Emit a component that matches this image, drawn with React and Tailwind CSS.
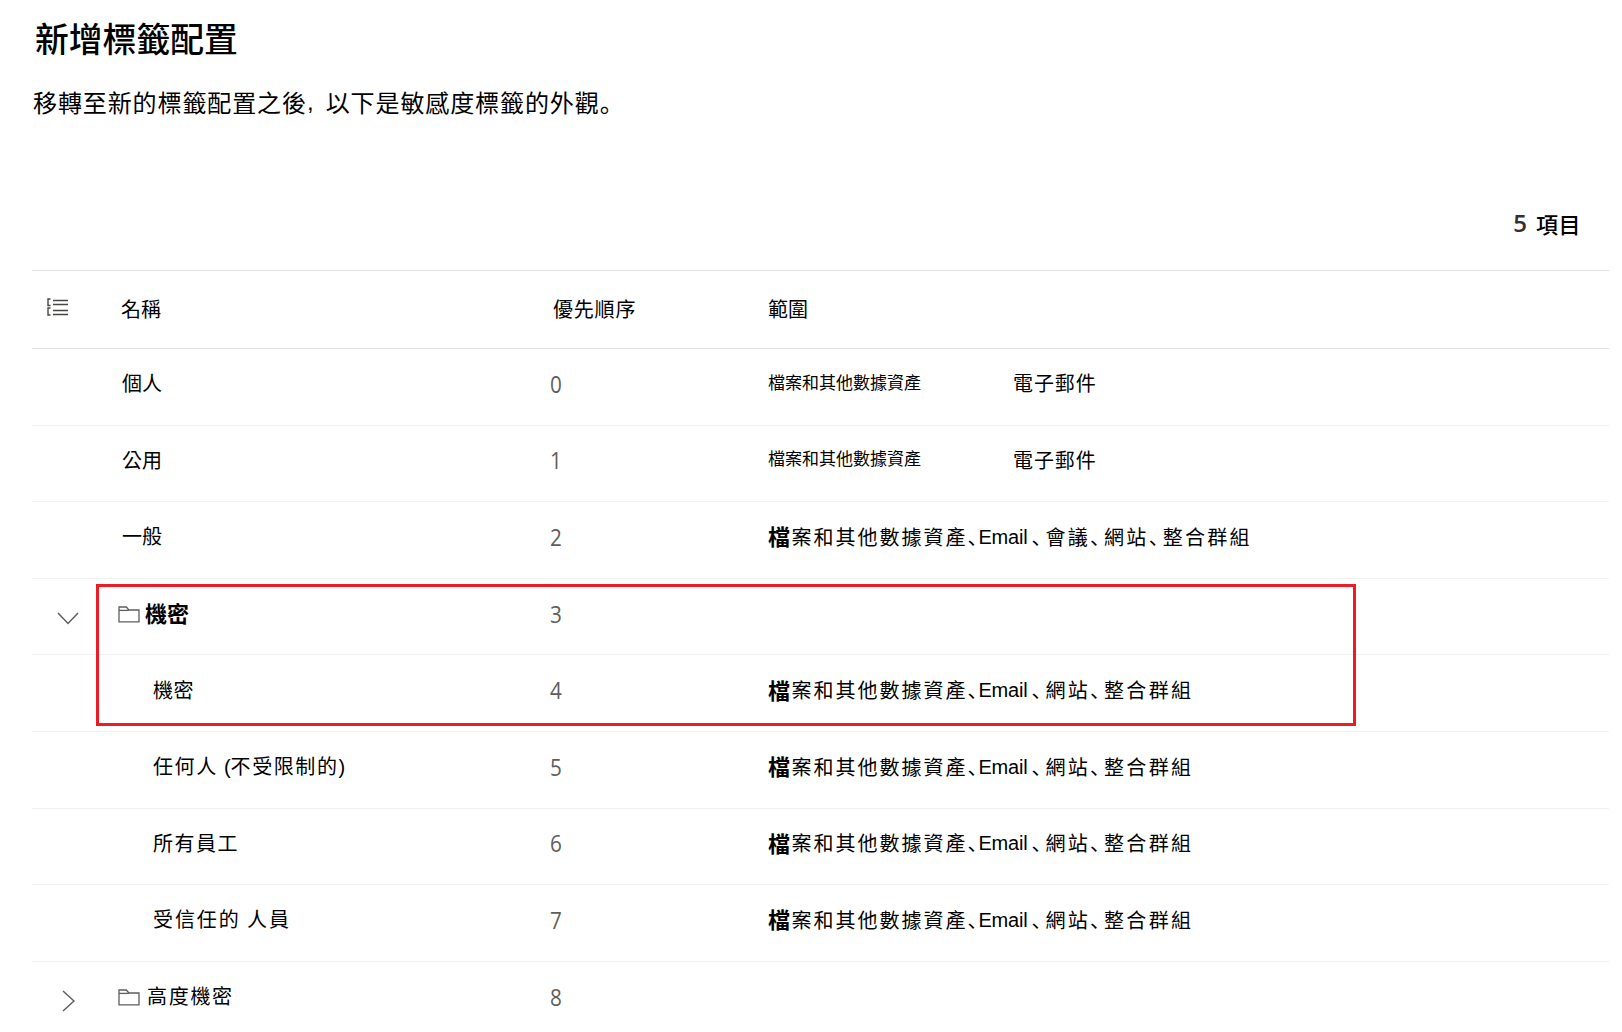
import React from "react";

const CJK = "[font-family:'Noto_Sans_CJK_TC','Noto_Sans',sans-serif]";

function Dun() {
  return <span className="[font-family:'Noto_Sans_CJK_SC',sans-serif] tracking-[-6px]">、</span>;
}

function LongScope({ meeting }) {
  return (
    <span className="flex items-center whitespace-nowrap pt-[1px] text-[20px] tracking-[2.3px] text-black">
      <span className="mb-[3px] text-[22px] font-bold leading-none tracking-[1.4px]">檔</span>
      <span className="tracking-[2px]">案和其他數據資產</span>
      <span className="[font-family:'Noto_Sans_CJK_SC',sans-serif] tracking-[-9px]">、</span>
      <span className="mr-[4px] [font-family:'Liberation_Sans',sans-serif] text-[20px] tracking-[-0.2px]">Email</span>
      <Dun />
      {meeting ? (
        <>
          <span>會議</span>
          <Dun />
        </>
      ) : null}
      <span>網站</span>
      <Dun />
      <span>整合群組</span>
    </span>
  );
}

function ShortScope() {
  return (
    <span className="flex items-center whitespace-nowrap">
      <span className="w-[245px] pb-[4px] text-[17px] text-black">檔案和其他數據資產</span>
      <span className="text-[20px] tracking-[0.9px] text-black">電子郵件</span>
    </span>
  );
}

function Folder() {
  return (
    <svg width="22" height="17" viewBox="0 0 22 17" fill="none" className="mt-[2px] shrink-0" stroke="#605e5c" strokeWidth="1.3">
      <path d="M1 15.8V1h7.4l2.4 3H21v11.8z" />
      <path d="M1 4.4h9.8" />
    </svg>
  );
}

function Row({ toggle, children, num, scope }) {
  return (
    <div className="grid h-[76.6px] grid-cols-[88px_430px_218px_1fr] items-center border-b border-[#f1f1f1] pb-[7px]">
      <div className="flex w-[72px] justify-center pt-[10px]">{toggle}</div>
      <div className="flex items-center whitespace-nowrap text-[20px] text-black">{children}</div>
      <div className="origin-left scale-x-90 pt-[2px] [font-family:'Open_Sans',sans-serif] text-[23px] leading-none text-[#605e5c]">{num}</div>
      <div>{scope}</div>
    </div>
  );
}

export default function App() {
  return (
    <div className={`relative h-[1032px] w-[1622px] overflow-hidden bg-white pl-[32px] ${CJK}`}>
      <div className="flex h-[76px] items-center pl-[3px] text-[33.8px] font-medium leading-none text-black">新增標籤配置</div>
      <div className="flex h-[50px] items-center whitespace-nowrap pl-[1px] pt-[2px] text-[24px] leading-none tracking-[0.9px] text-black">
        移轉至新的標籤配置之後
        <span className="[font-family:'Liberation_Sans',sans-serif] tracking-[-0.4px]">,&nbsp;&nbsp;</span>
        以下是敏感度標籤的外觀
        <span className="[font-family:'Noto_Sans_CJK_SC',sans-serif]">。</span>
      </div>
      <div className="mt-[54px] flex h-[90px] w-[1549px] items-center justify-end pb-[4px] leading-none text-black">
        <span className="mr-[9px] [font-family:'Open_Sans',sans-serif] text-[24px] font-semibold text-[#323130]">5</span>
        <span className="text-[22px] font-medium tracking-[0.5px]">項目</span>
      </div>
      <div className="w-[1577px] border-t border-[#e1e1e1]">
        <div className="grid h-[78px] grid-cols-[89px_432px_215px_1fr] items-center border-b border-[#e1e1e1] pb-[2px] text-[20px] text-black">
          <div className="pl-[15px]">
            <svg width="22" height="18" viewBox="0 0 22 18" fill="none" className="-mt-[3px] block" stroke="#484644">
              <path d="M3.5 1H1v6.5h2.5M3.5 10H1v7h2.5" strokeWidth="1.4" />
              <path d="M6 2.5h15M6 6.5h15M6 12.5h15M6 16.5h15" strokeWidth="1.4" />
            </svg>
          </div>
          <div>名稱</div>
          <div className="tracking-[0.8px]">優先順序</div>
          <div>範圍</div>
        </div>
        <Row num="0" scope={<ShortScope />}><span className="pl-[2px]">個人</span></Row>
        <Row num="1" scope={<ShortScope />}><span className="pl-[2px]">公用</span></Row>
        <Row num="2" scope={<LongScope meeting />}><span className="pl-[2px]">一般</span></Row>
        <Row
          num="3"
          toggle={
            <svg width="22" height="13" viewBox="0 0 22 13" fill="none" stroke="#605e5c" strokeWidth="1.5">
              <path d="M1 1l10 10.5L21 1" />
            </svg>
          }
        >
          <div className="-ml-[2px] flex items-center">
            <Folder />
            <span className="mb-[2px] ml-[5px] text-[22px] font-bold leading-none">機密</span>
          </div>
        </Row>
        <Row num="4" scope={<LongScope />}>
          <span className="pl-[33px] tracking-[0.6px]">機密</span>
        </Row>
        <Row num="5" scope={<LongScope />}>
          <span className="pl-[33px] tracking-[1.6px]">
            任何人 <span className="[font-family:'Liberation_Sans',sans-serif] tracking-normal">(</span>不受限制的<span className="[font-family:'Liberation_Sans',sans-serif] tracking-normal">)</span>
          </span>
        </Row>
        <Row num="6" scope={<LongScope />}>
          <span className="pl-[33px] tracking-[1.5px]">所有員工</span>
        </Row>
        <Row num="7" scope={<LongScope />}>
          <span className="pl-[33px] tracking-[1.9px]">受信任的 人員</span>
        </Row>
        <Row
          num="8"
          toggle={
            <svg width="13" height="22" viewBox="0 0 13 22" fill="none" stroke="#605e5c" strokeWidth="1.5">
              <path d="M1 1l11 10L1 21" />
            </svg>
          }
        >
          <div className="-ml-[2px] flex items-center">
            <Folder />
            <span className="ml-[7px] tracking-[1.7px]">高度機密</span>
          </div>
        </Row>
      </div>
      <div className="absolute left-[96px] top-[584px] h-[142px] w-[1260px] border-[3px] border-[#ed1c24]" />
    </div>
  );
}
